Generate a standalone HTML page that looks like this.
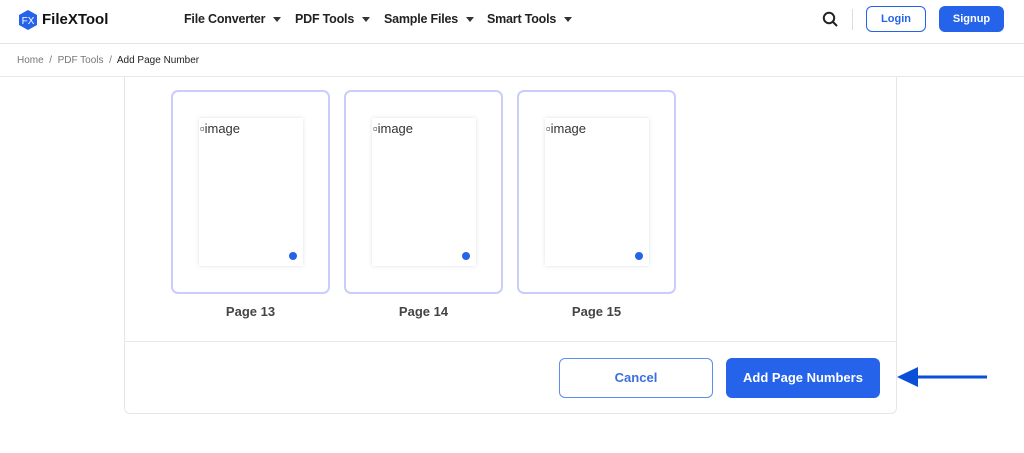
<!DOCTYPE html>
<html><head><style>
*{margin:0;padding:0;box-sizing:border-box}
body{width:1024px;height:453px;background:#fff;font-family:"Liberation Sans",sans-serif;position:relative;overflow:hidden;color:#222}
.a{position:absolute}
.nav{font-size:12.5px;font-weight:bold;color:#222;top:12px;letter-spacing:-0.2px}
.car{display:inline-block;border-left:4px solid transparent;border-right:4px solid transparent;border-top:5px solid #333;margin-left:8px;vertical-align:middle}
.card{position:absolute;top:90px;width:159px;height:204px;border:2px solid #c9cdfb;border-radius:7px}
.paper{position:absolute;left:26px;top:26px;width:104px;height:148px;background:#fff;box-shadow:0 0 4px rgba(0,0,0,.12);font-size:13px;color:#333;padding:3px 0 0 1px}
.dot{position:absolute;right:6px;bottom:6px;width:8px;height:8px;border-radius:50%;background:#2563eb}
.lbl{position:absolute;top:304px;width:159px;text-align:center;font-size:13px;font-weight:bold;color:#444}
</style></head><body>
<svg class="a" style="left:18px;top:10px" width="20" height="20" viewBox="0 0 20 20"><polygon points="10,0 19,5 19,15 10,20 1,15 1,5" fill="#2563eb"/><text x="10" y="14" font-size="10" fill="#fff" text-anchor="middle" font-family="Liberation Sans">FX</text></svg>
<div class="a" style="left:42px;top:11px;font-size:15px;font-weight:bold;color:#111">FileXTool</div>
<div class="a nav" style="left:184px">File Converter<span class="car"></span></div>
<div class="a nav" style="left:295px">PDF Tools<span class="car"></span></div>
<div class="a nav" style="left:384px">Sample Files<span class="car"></span></div>
<div class="a nav" style="left:487px">Smart Tools<span class="car"></span></div>
<svg class="a" style="left:822px;top:11px" width="16" height="16" viewBox="0 0 16 16"><circle cx="7" cy="7" r="5.2" stroke="#222" stroke-width="2" fill="none"/><line x1="11" y1="11" x2="15" y2="15" stroke="#222" stroke-width="2"/></svg>
<div class="a" style="left:852px;top:9px;width:1px;height:21px;background:#ddd"></div>
<div class="a" style="left:866px;top:6px;width:60px;height:26px;border:1.5px solid #2563eb;border-radius:6px;text-align:center;line-height:25px;font-size:11px;font-weight:bold;color:#2563eb">Login</div>
<div class="a" style="left:939px;top:6px;width:65px;height:26px;background:#2563eb;border-radius:6px;text-align:center;line-height:27px;font-size:11px;font-weight:bold;color:#fff">Signup</div>
<div class="a" style="left:0;top:43px;width:1024px;height:1px;background:#e3e3e3"></div>
<div class="a" style="left:17px;top:55px;font-size:10px;color:#777">Home &nbsp;/&nbsp; PDF Tools &nbsp;/&nbsp; <span style="color:#222">Add Page Number</span></div>
<div class="a" style="left:0;top:76px;width:1024px;height:1px;background:#e8e8e8"></div>
<div class="a" style="left:124px;top:76px;width:773px;height:338px;border:1px solid #e6e6e6;border-top:none;border-radius:0 0 6px 6px"></div>
<div class="a" style="left:125px;top:341px;width:771px;height:1px;background:#e8e8e8"></div>
<div class="card" style="left:171px"><div class="paper">▫image<div class="dot"></div></div></div>
<div class="lbl" style="left:171px">Page 13</div>
<div class="card" style="left:344px"><div class="paper">▫image<div class="dot"></div></div></div>
<div class="lbl" style="left:344px">Page 14</div>
<div class="card" style="left:517px"><div class="paper">▫image<div class="dot"></div></div></div>
<div class="lbl" style="left:517px">Page 15</div>
<div class="a" style="left:559px;top:358px;width:154px;height:40px;border:1.5px solid #5b8def;border-radius:6px;text-align:center;line-height:37px;font-size:13px;font-weight:bold;color:#3b6fe0">Cancel</div>
<div class="a" style="left:726px;top:358px;width:154px;height:40px;background:#2563eb;border-radius:6px;text-align:center;line-height:40px;font-size:13px;font-weight:bold;color:#fff">Add Page Numbers</div>
<svg class="a" style="left:895px;top:366px" width="95" height="22" viewBox="0 0 95 22"><polygon points="2,11 23,1 23,21" fill="#0b4fd8"/><rect x="20" y="9.5" width="72" height="3" fill="#0b4fd8"/></svg>
</body></html>
